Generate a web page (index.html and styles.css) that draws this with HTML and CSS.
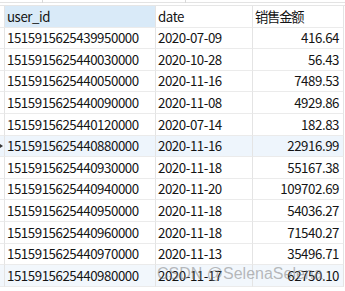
FILE: index.html
```html
<!DOCTYPE html>
<html>
<head>
<meta charset="utf-8">
<link rel="stylesheet" href="styles.css">
</head>
<body>
<div class="page">
  <div class="topstrip"><span class="tick t1"></span><span class="tick t2"></span></div>
  <div class="grid">
    <div class="ind hd"></div><div class="c hd sel">user_id</div><div class="c hd">date</div><div class="c hd cjk">销售金额</div>
    <div class="ind"></div><div class="c">1515915625439950000</div><div class="c">2020-07-09</div><div class="c num">416.64</div>
    <div class="ind"></div><div class="c">1515915625440030000</div><div class="c">2020-10-28</div><div class="c num">56.43</div>
    <div class="ind"></div><div class="c">1515915625440050000</div><div class="c">2020-11-16</div><div class="c num">7489.53</div>
    <div class="ind"></div><div class="c">1515915625440090000</div><div class="c">2020-11-08</div><div class="c num">4929.86</div>
    <div class="ind"></div><div class="c">1515915625440120000</div><div class="c">2020-07-14</div><div class="c num">182.83</div>
    <div class="ind cur"><span class="arrow"></span></div><div class="c cur">1515915625440880000</div><div class="c cur">2020-11-16</div><div class="c num cur">22916.99</div>
    <div class="ind"></div><div class="c">1515915625440930000</div><div class="c">2020-11-18</div><div class="c num">55167.38</div>
    <div class="ind"></div><div class="c">1515915625440940000</div><div class="c">2020-11-20</div><div class="c num">109702.69</div>
    <div class="ind"></div><div class="c">1515915625440950000</div><div class="c">2020-11-18</div><div class="c num">54036.27</div>
    <div class="ind"></div><div class="c">1515915625440960000</div><div class="c">2020-11-18</div><div class="c num">71540.27</div>
    <div class="ind"></div><div class="c">1515915625440970000</div><div class="c">2020-11-13</div><div class="c num">35496.71</div>
    <div class="ind hov"></div><div class="c hov">1515915625440980000</div><div class="c hov">2020-11-17</div><div class="c num hov">62750.10</div>
  </div>
  <div class="watermark">CSDN @SelenaSelena</div>
</div>
</body>
</html>
```
FILE: styles.css
```css
html, body {
  margin: 0;
  padding: 0;
  background: #ffffff;
}
.page {
  position: relative;
  width: 345px;
  height: 291px;
  overflow: hidden;
  font-family: "Noto Sans CJK SC", "Noto Sans", sans-serif;
  font-size: 13.3px;
  letter-spacing: -0.45px;
  color: #141414;
}
.topstrip {
  position: relative;
  height: 6px;
  border-bottom: 1px solid #e6e6e6;
  box-sizing: border-box;
}
.topstrip::before {
  content: "";
  position: absolute;
  left: 0;
  right: 0;
  top: 2px;
  height: 1px;
  background: #e3e3e3;
}
.tick {
  position: absolute;
  top: 0;
  width: 1px;
  height: 3px;
  background: #d8d8d8;
}
.t1 { left: 42px; }
.t2 { left: 185px; }
.grid {
  display: grid;
  grid-template-columns: 4px 151px 97px 92px;
  grid-auto-rows: 21.6px;
}
.c, .ind {
  box-sizing: border-box;
  border-bottom: 1px solid #ebebeb;
  display: flex;
  align-items: center;
  white-space: nowrap;
  overflow: hidden;
}
.c {
  border-left: 1px solid #e4e4e4;
  padding-left: 2px;
  line-height: 1;
}
.c.num {
  justify-content: flex-end;
  padding-right: 4px;
  border-right: 1px solid #e4e4e4;
}
.hd {
  background: #ffffff;
}
.c.cjk {
  border-right: 1px solid #e4e4e4;
  letter-spacing: -1.2px;
}
.hd.sel {
  background: #d9eaf8;
}
.cur {
  background: #eef5fc;
}
.hov {
  background: #f2f7fc;
}
.ind {
  position: relative;
}
.arrow {
  position: absolute;
  left: 0;
  top: 8px;
  width: 0;
  height: 0;
  border-top: 2px solid transparent;
  border-bottom: 2px solid transparent;
  border-left: 3px solid #333;
}
.watermark {
  position: absolute;
  left: 157px;
  top: 265px;
  font-family: "Liberation Sans", sans-serif;
  font-size: 16px;
  letter-spacing: 0;
  color: rgba(120, 120, 120, 0.5);
  white-space: nowrap;
}
```
